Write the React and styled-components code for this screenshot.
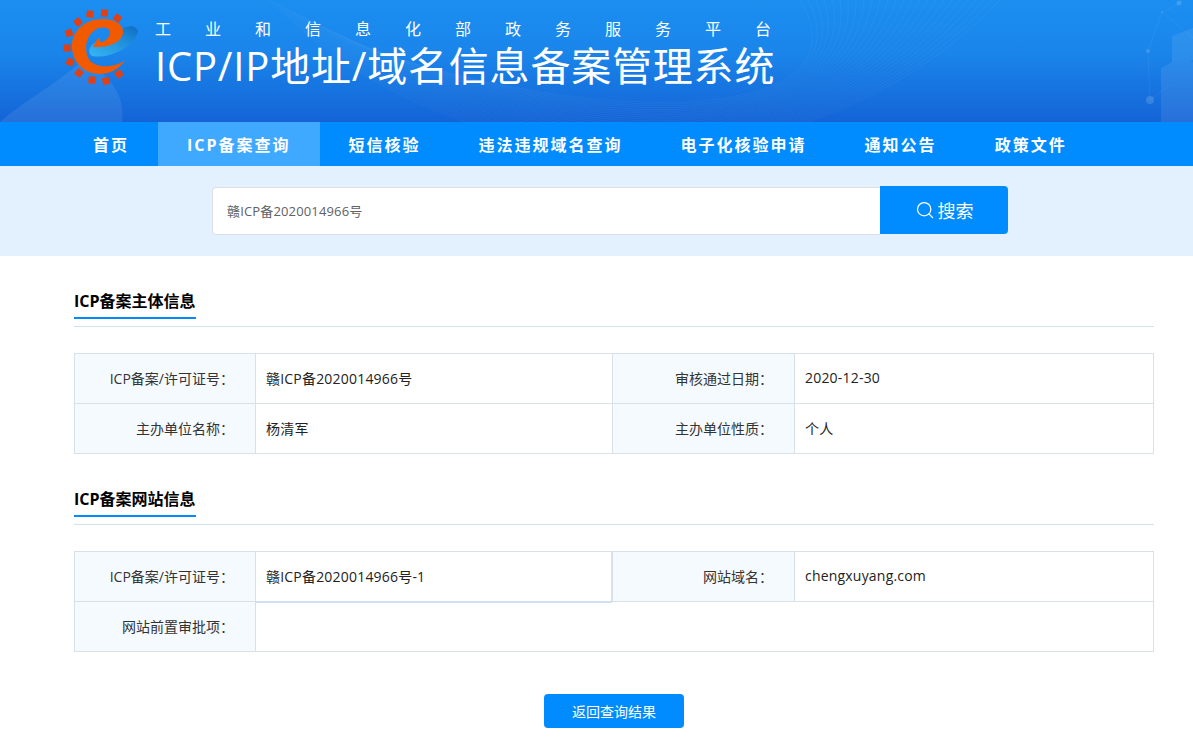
import React from 'react';
import styled, { createGlobalStyle } from 'styled-components';
import { Search } from 'lucide-react';

const GlobalStyle = createGlobalStyle`
  html, body {
    margin: 0;
    padding: 0;
    background: #fff;
    font-family: "Open Sans", "Noto Sans CJK SC", sans-serif;
  }
`;

const Page = styled.div`
  width: 1193px;
  height: 741px;
  overflow: hidden;
`;

const Banner = styled.header`
  position: relative;
  height: 122px;
  overflow: hidden;
  background: linear-gradient(180deg, #1b8ff1 0%, #1a84ea 45%, #1464d6 100%);
`;

const BannerArt = styled.svg`
  position: absolute;
  left: 0;
  top: 0;
`;

const BannerInner = styled.div`
  position: relative;
  display: flex;
  padding: 5px 0 0 60px;
  gap: 15px;
`;

const BannerText = styled.div`
  display: flex;
  flex-direction: column;
  color: #fff;
  padding-top: 13px;
`;

const Ministry = styled.div`
  font-size: 16px;
  line-height: 22px;
  letter-spacing: 34px;
  white-space: nowrap;
  width: 620px;
`;

const SystemName = styled.div`
  font-size: 40px;
  line-height: 48px;
  letter-spacing: 0.8px;
  white-space: nowrap;
  margin-top: 2px;
`;

const Nav = styled.nav`
  display: flex;
  height: 44px;
  padding-left: 64px;
  background: #008cff;
`;

const NavItem = styled.a`
  display: flex;
  align-items: center;
  padding: 0 29px 1px;
  font-size: 16px;
  font-weight: 700;
  letter-spacing: 2px;
  color: #fff;
  background: ${(p) => (p.$active ? '#3fa9ff' : 'transparent')};
`;

const SearchBand = styled.div`
  display: flex;
  align-items: flex-start;
  justify-content: center;
  height: 90px;
  padding: 20px 185px 0 212px;
  box-sizing: border-box;
  background: #e3f1ff;
`;

const SearchInput = styled.div`
  flex: 1;
  height: 48px;
  margin-top: 1px;
  box-sizing: border-box;
  display: flex;
  align-items: center;
  padding: 0 0 2px 14px;
  font-size: 13px;
  letter-spacing: 0.15px;
  color: #606266;
  background: #fff;
  border: 1px solid #dcdfe6;
  border-right: none;
  border-radius: 4px 0 0 4px;
`;

const SearchButton = styled.button`
  width: 128px;
  height: 48px;
  display: flex;
  align-items: center;
  justify-content: center;
  gap: 3px;
  padding: 0;
  border: none;
  border-radius: 0 4px 4px 0;
  font-family: inherit;
  font-size: 18px;
  color: #fff;
  background: #008cff;
`;

const Content = styled.main`
  padding: 33px 39px 0 74px;
`;

const SectionHead = styled.div`
  border-bottom: 1px solid #cfe3f4;
  height: 37px;
  margin-bottom: 26px;
`;

const SectionTitle = styled.h2`
  display: inline-block;
  margin: 0;
  height: 30px;
  line-height: 25px;
  box-sizing: border-box;
  font-size: 16px;
  font-weight: 700;
  color: #000;
  border-bottom: 2px solid #008cff;
`;

const InfoTable = styled.div`
  display: grid;
  grid-template-columns: 181px 357px 182px 1fr;
  grid-auto-rows: 50px;
  border: solid #d8e0e8;
  border-width: 1px 1px 0 0;
  margin-bottom: 33px;
  width: 1080px;
  box-sizing: border-box;
`;

const Cell = styled.div`
  display: flex;
  align-items: center;
  box-sizing: border-box;
  padding-bottom: 2px;
  font-size: 14px;
  color: #333;
  border: solid #d8e0e8;
  border-width: 0 0 1px 1px;
`;

const Label = styled(Cell)`
  justify-content: flex-end;
  padding-right: 21px;
  background: #f5fafe;
`;

const Value = styled(Cell)`
  padding-left: 10px;
  letter-spacing: 0.2px;
  background: #fff;
  color: #222;
  ${(p) => p.$span && `grid-column: span ${p.$span};`}
  ${(p) => p.$marked && `
    height: 51px;
    position: relative;
    z-index: 1;
    border-bottom: 2px solid #cfe0f0;
    border-right: 1px solid #d8e0e8;
  `}
`;

const Footer = styled.div`
  display: flex;
  justify-content: center;
  padding-top: 9px;
`;

const BackButton = styled.button`
  width: 140px;
  height: 34px;
  border: none;
  border-radius: 4px;
  font-family: inherit;
  font-size: 14px;
  color: #fff;
  background: #008cff;
`;

const Logo = () => (
  <svg width="80" height="80" viewBox="60 5 80 80">
    <defs>
      <linearGradient id="sw" x1="0" y1="1" x2="1" y2="0">
        <stop offset="0" stopColor="#38b6f4" />
        <stop offset="0.6" stopColor="#1f8fdc" />
        <stop offset="1" stopColor="#0f6cc0" />
      </linearGradient>
    </defs>
    {[
      [90, 14, 10], [104.5, 13, 5], [117.5, 18, 35], [78, 22, -40], [69, 33, -20], [67, 48, 0],
      [70, 62, 20], [79, 73, 40], [92, 80, 5], [106, 81, -10], [119, 74, -35],
    ].map(([x, y, r]) => (
      <rect key={`${x}-${y}`} x={x - 3.5} y={y - 3.5} width="7" height="7" fill="#e23f12" transform={`rotate(${r} ${x} ${y})`} />
    ))}
    <path
      d="M138 31C136 25 128 25 122 29C124 38 110 46 96 42C89 46 87 52 92 56C105 59 134 50 138 31Z"
      fill="url(#sw)"
    />
    <path
      d="M125 61C116 72 104 76 92 73C78 69 71 57 72 44C73 30 86 19 102 19C115 19 124 25 123 33C122 42 108 48 95 47C93 47 92 46 94 45C103 43 110 38 110 33C110 27 101 26 95 30C86 36 84 48 88 58C94 68 110 69 125 61Z"
      fill="#f25a00"
    />
    <path d="M94 46C95 42 97 39 100 37C99 40 99 43 106 43C102 46 98 48 94 46Z" fill="#f25a00" />
  </svg>
);

const arcs = Array.from({ length: 26 }, (_, i) => i);

const Art = () => (
  <BannerArt width="1193" height="122" viewBox="0 0 1193 122">
    <path d="M0 122C20 104 50 88 84 60C108 74 126 94 122 122Z" fill="#fff" opacity="0.08" />
    <g fill="none" stroke="#fff" strokeWidth="0.6" opacity="0.07">
      {arcs.map((i) => (
        <path key={i} d={`M${270 + i * 4} ${i * 2}C${480 + i * 6} ${210 - i * 3} ${820 + i * 2} ${190 - i * 3} ${1000 - i * 8} 0`} />
      ))}
    </g>
    <g stroke="#fff" strokeWidth="0.5" fill="none" opacity="0.1">
      <path d="M1148 51L1162 12L1179 4M1148 51L1150 100M1162 12L1193 38M1150 100L1170 85" />
    </g>
    <g fill="#fff" opacity="0.14">
      <circle cx="1148" cy="51" r="2" />
      <circle cx="1162" cy="12" r="1" />
      <circle cx="1179" cy="3" r="2.5" />
      <circle cx="1150" cy="100" r="4" />
    </g>
    <g fill="#fff" opacity="0.08">
      <path d="M1161 68L1180 58L1193 62V122H1161Z" />
      <path d="M1165 85L1185 74L1193 76V122H1165Z" />
      <path d="M1172 36L1193 28V60L1172 68Z" />
    </g>
  </BannerArt>
);

const navItems = ['首页', 'ICP备案查询', '短信核验', '违法违规域名查询', '电子化核验申请', '通知公告', '政策文件'];

export default function App() {
  return (
    <Page>
      <GlobalStyle />
      <Banner>
        <Art />
        <BannerInner>
          <Logo />
          <BannerText>
            <Ministry>工业和信息化部政务服务平台</Ministry>
            <SystemName>ICP/IP地址/域名信息备案管理系统</SystemName>
          </BannerText>
        </BannerInner>
      </Banner>
      <Nav>
        {navItems.map((item) => (
          <NavItem key={item} $active={item === 'ICP备案查询'}>{item}</NavItem>
        ))}
      </Nav>
      <SearchBand>
        <SearchInput>赣ICP备2020014966号</SearchInput>
        <SearchButton>
          <Search size={20} strokeWidth={1.5} />
          搜索
        </SearchButton>
      </SearchBand>
      <Content>
        <SectionHead>
          <SectionTitle>ICP备案主体信息</SectionTitle>
        </SectionHead>
        <InfoTable>
          <Label>ICP备案/许可证号：</Label>
          <Value>赣ICP备2020014966号</Value>
          <Label>审核通过日期：</Label>
          <Value>2020-12-30</Value>
          <Label>主办单位名称：</Label>
          <Value>杨清军</Value>
          <Label>主办单位性质：</Label>
          <Value>个人</Value>
        </InfoTable>
        <SectionHead>
          <SectionTitle>ICP备案网站信息</SectionTitle>
        </SectionHead>
        <InfoTable>
          <Label>ICP备案/许可证号：</Label>
          <Value $marked>赣ICP备2020014966号-1</Value>
          <Label>网站域名：</Label>
          <Value>chengxuyang.com</Value>
          <Label>网站前置审批项：</Label>
          <Value $span={3} />
        </InfoTable>
        <Footer>
          <BackButton>返回查询结果</BackButton>
        </Footer>
      </Content>
    </Page>
  );
}
